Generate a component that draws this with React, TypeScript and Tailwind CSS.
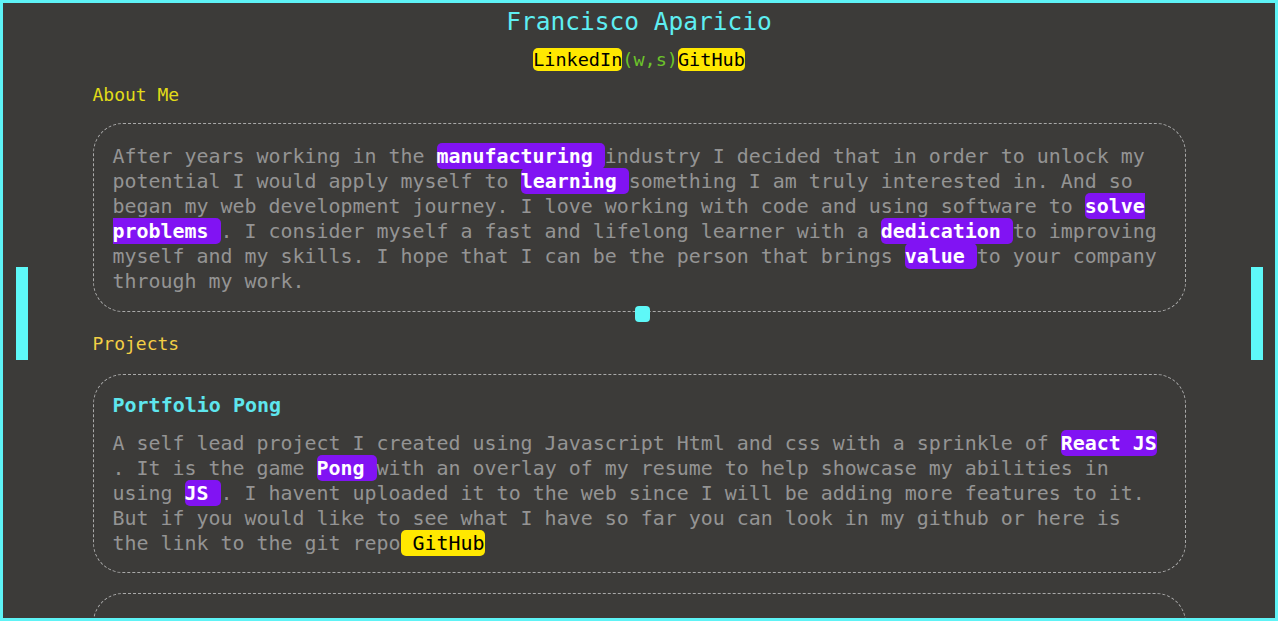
import React from 'react';

const mono = { fontFamily: '"DejaVu Sans Mono", "Liberation Mono", monospace' };

function Hl({ children }: { children: React.ReactNode }) {
    return <span className="bg-[#8113f3] text-white font-bold rounded-[5px] py-[1px]">{children}</span>;
}

function YellowLink({ children }: { children: React.ReactNode }) {
    return <span className="bg-[#ffe800] text-black rounded-[5px] py-[1px]">{children}</span>;
}

export default function App() {
    return (
        <div
            style={mono}
            className="relative h-[621px] w-full overflow-hidden border-[3px] border-[#5ef3f6] bg-[#3c3b39]"
        >
            <div className="mx-auto w-[1093px]">
                <h1 className="pt-[4px] text-center text-[24.5px] leading-[30px] text-[#5eeef2]">
                    Francisco Aparicio
                </h1>
                <div className="mt-[10px] text-center text-[18.5px] leading-[25px]">
                    <YellowLink>LinkedIn</YellowLink>
                    <span className="text-[#6cc42a]">(w,s)</span>
                    <YellowLink>GitHub</YellowLink>
                </div>

                <h2 className="mt-[12px] text-[18px] leading-[22px] text-[#e2dc18]">About Me</h2>
                <div className="mt-[17px] rounded-[30px] border border-dashed border-[#a9a9a9] px-[19px] pt-[20px] pb-[17px]">
                    <p className="text-[19.94px] leading-[25px] text-[#949494]">
                        After years working in the <Hl>manufacturing </Hl>industry I decided that in order to unlock my
                        potential I would apply myself to <Hl>learning </Hl>something I am truly interested in. And so
                        began my web development journey. I love working with code and using software to{' '}
                        <Hl>solve problems </Hl>. I consider myself a fast and lifelong learner with a{' '}
                        <Hl>dedication </Hl>to improving myself and my skills. I hope that I can be the person that
                        brings <Hl>value </Hl>to your company through my work.
                    </p>
                </div>

                <h2 className="mt-[21px] text-[18px] leading-[22px] text-[#f3cf45]">Projects</h2>
                <div className="mt-[19px] rounded-[30px] border border-dashed border-[#a9a9a9] px-[19px] pt-[18px] pb-[16px]">
                    <h3 className="text-[20px] leading-[25px] font-bold text-[#5ee6ee]">Portfolio Pong</h3>
                    <p className="mt-[13px] text-[19.94px] leading-[25px] text-[#949494]">
                        A self lead project I created using Javascript Html and css with a sprinkle of{' '}
                        <Hl>React JS </Hl>. It is the game <Hl>Pong </Hl>with an overlay of my resume to help showcase
                        my abilities in using <Hl>JS </Hl>. I havent uploaded it to the web since I will be adding more
                        features to it. But if you would like to see what I have so far you can look in my github or
                        here is the link to the git repo<YellowLink> GitHub</YellowLink>
                    </p>
                </div>

                <div className="mt-[20px] h-[120px] rounded-[30px] border border-dashed border-[#a9a9a9]" />
            </div>

            {/* game pieces */}
            <div className="absolute left-[13px] top-[264px] h-[93px] w-[12px] bg-[#5ef8f8]" />
            <div className="absolute right-[12px] top-[264px] h-[93px] w-[12px] bg-[#5ef8f8]" />
            <div className="absolute left-[632px] top-[303px] h-[16px] w-[15px] rounded-[4px] bg-[#5ef8f8]" />
        </div>
    );
}
